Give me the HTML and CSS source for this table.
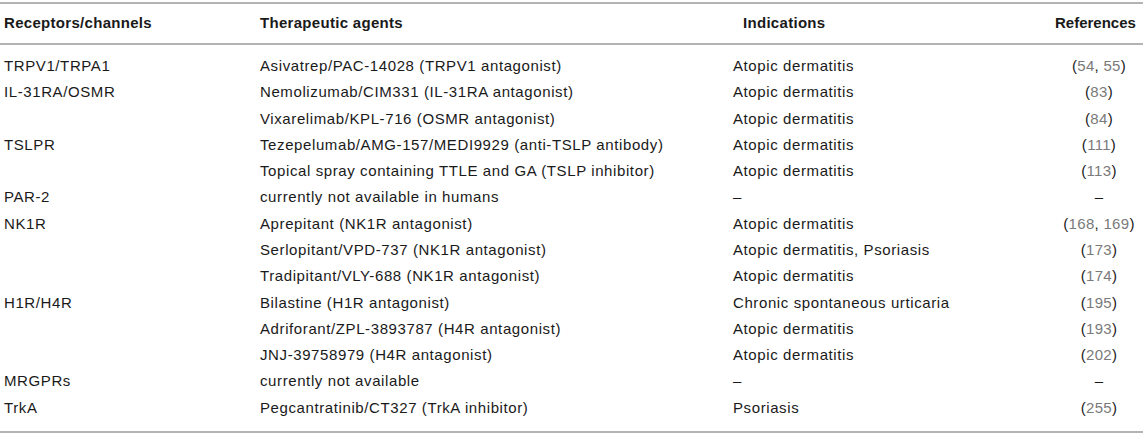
FILE: index.html
```html
<!DOCTYPE html>
<html lang="en">
<head>
<meta charset="utf-8">
<title>Table</title>
<link rel="stylesheet" href="styles.css">
</head>
<body>
<table class="tbl">
  <colgroup>
    <col class="c1"><col class="c2"><col class="c3"><col class="c4">
  </colgroup>
  <thead>
    <tr>
      <th>Receptors/channels</th>
      <th>Therapeutic agents</th>
      <th>Indications</th>
      <th class="ref-head">References</th>
    </tr>
  </thead>
  <tbody>
    <tr class="first"><td>TRPV1/TRPA1</td><td>Asivatrep/PAC-14028 (TRPV1 antagonist)</td><td>Atopic dermatitis</td><td class="ref">(<span class="n">54</span>, <span class="n">55</span>)</td></tr>
    <tr><td>IL-31RA/OSMR</td><td>Nemolizumab/CIM331 (IL-31RA antagonist)</td><td>Atopic dermatitis</td><td class="ref">(<span class="n">83</span>)</td></tr>
    <tr><td></td><td>Vixarelimab/KPL-716 (OSMR antagonist)</td><td>Atopic dermatitis</td><td class="ref">(<span class="n">84</span>)</td></tr>
    <tr><td>TSLPR</td><td>Tezepelumab/AMG-157/MEDI9929 (anti-TSLP antibody)</td><td>Atopic dermatitis</td><td class="ref">(<span class="n">111</span>)</td></tr>
    <tr><td></td><td>Topical spray containing TTLE and GA (TSLP inhibitor)</td><td>Atopic dermatitis</td><td class="ref">(<span class="n">113</span>)</td></tr>
    <tr><td>PAR-2</td><td>currently not available in humans</td><td>–</td><td class="ref">–</td></tr>
    <tr><td>NK1R</td><td>Aprepitant (NK1R antagonist)</td><td>Atopic dermatitis</td><td class="ref">(<span class="n">168</span>, <span class="n">169</span>)</td></tr>
    <tr><td></td><td>Serlopitant/VPD-737 (NK1R antagonist)</td><td>Atopic dermatitis, Psoriasis</td><td class="ref">(<span class="n">173</span>)</td></tr>
    <tr><td></td><td>Tradipitant/VLY-688 (NK1R antagonist)</td><td>Atopic dermatitis</td><td class="ref">(<span class="n">174</span>)</td></tr>
    <tr><td>H1R/H4R</td><td>Bilastine (H1R antagonist)</td><td>Chronic spontaneous urticaria</td><td class="ref">(<span class="n">195</span>)</td></tr>
    <tr><td></td><td>Adriforant/ZPL-3893787 (H4R antagonist)</td><td>Atopic dermatitis</td><td class="ref">(<span class="n">193</span>)</td></tr>
    <tr><td></td><td>JNJ-39758979 (H4R antagonist)</td><td>Atopic dermatitis</td><td class="ref">(<span class="n">202</span>)</td></tr>
    <tr><td>MRGPRs</td><td>currently not available</td><td>–</td><td class="ref">–</td></tr>
    <tr class="last"><td>TrkA</td><td>Pegcantratinib/CT327 (TrkA inhibitor)</td><td>Psoriasis</td><td class="ref">(<span class="n">255</span>)</td></tr>
  </tbody>
</table>
</body>
</html>
```

FILE: styles.css
```css
html, body {
  margin: 0;
  padding: 0;
  background: #ffffff;
}

body {
  padding-top: 2px;
  font-family: "Liberation Sans", Arial, sans-serif;
  font-size: 15px;
  color: #1a1a1a;
}

.tbl {
  width: 1143px;
  border-collapse: collapse;
  table-layout: fixed;
  border-top: 2px solid #b3b3b3;
  border-bottom: 2px solid #b3b3b3;
}

.c1 { width: 252px; }
.c2 { width: 473px; }
.c3 { width: 330px; }
.c4 { width: 88px; }

.tbl th {
  text-align: left;
  font-weight: bold;
  letter-spacing: 0.3px;
  line-height: 17px;
  padding: 10px 8px 12px;
  border-bottom: 2px solid #b3b3b3;
  white-space: nowrap;
}

.tbl td {
  letter-spacing: 0.6px;
  line-height: 18px;
  padding: 4.15px 8px;
  white-space: nowrap;
  vertical-align: middle;
}

.tbl th:first-child,
.tbl td:first-child {
  padding-left: 4px;
}

.tbl th:nth-child(3) {
  padding-left: 18px;
}

.tbl th.ref-head {
  text-align: right;
  letter-spacing: 0;
  padding-left: 0;
  padding-right: 8px;
  overflow: visible;
}

.tbl .ref {
  text-align: center;
  letter-spacing: 0.3px;
  padding-left: 0;
  padding-right: 0;
}

.tbl tr.first td {
  padding-top: 12px;
}

.tbl tr.last td {
  padding-bottom: 14px;
}

.n {
  color: #7a7a7a;
}
```
